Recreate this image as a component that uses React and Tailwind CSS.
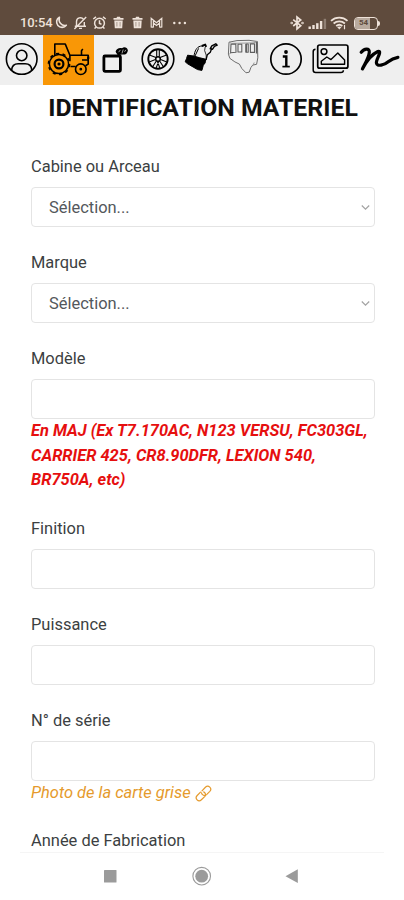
import React, { useState } from 'react';

// ------------------------
// Status bar
// ------------------------
function TrashIcon() {
  return (
    <svg className="w-[19px] h-5 shrink-0" viewBox="0 0 19 20" fill="currentColor">
      <path d="M4.5 5h3l.6-1.2h2.8l.6 1.2h3v1.7h-10zM5.3 7.5h8.4l-.5 7.7h-7.4z" />
      <path d="M7.9 9v4.5M11.1 9v4.5" stroke="#8d7b6e" strokeWidth="0.7" />
    </svg>
  );
}

function StatusBar() {
  return (
    <div className="h-[35px] bg-[#5f4b3d] text-[#eee2d9] flex items-start pt-[13px] pl-5 pr-6">
      <span className="w-8 text-[13px] leading-5 font-medium tracking-[-0.1px] whitespace-nowrap">10:54</span>
      {/* moon */}
      <svg className="w-[19px] h-5 shrink-0" viewBox="0 0 19 20" fill="none" stroke="currentColor" strokeWidth="1.6" strokeLinejoin="round">
        <path d="M7.4 4.2a5.4 5.4 0 1 0 6.9 8c-4.5 1.2-8.4-3-6.9-8z" />
      </svg>
      {/* muted bell */}
      <svg className="w-[19px] h-5 shrink-0" viewBox="0 0 19 20" fill="none" stroke="currentColor" strokeWidth="1.4">
        <path d="M5.5 12.8V8.5a3.8 3.8 0 0 1 7-2M13.3 9v4.2H15M3.8 13.3h9.8M8 15.4h3M3.4 16 15.2 4" />
      </svg>
      {/* alarm */}
      <svg className="w-[19px] h-5 shrink-0" viewBox="0 0 19 20" fill="none" stroke="currentColor" strokeWidth="1.5">
        <circle cx="9.5" cy="10.2" r="4.9" />
        <path d="M9.5 7.3v3.2l2 .7M3.3 6 6 3.9M15.7 6 13 3.9M5.9 14 4.6 15.6M13.1 14l1.3 1.6" />
      </svg>
      <TrashIcon />
      <TrashIcon />
      {/* mail */}
      <svg className="w-[19px] h-5 shrink-0" viewBox="0 0 19 20" fill="none" stroke="currentColor" strokeWidth="1.2">
        <path d="M4.2 14.6V5.3l5.3 4.4 5.3-4.4v9.3M6.4 14.6V7.5M12.6 14.6V7.5M4.2 14.2h2.2M12.6 14.2h2.2M6.4 10l3.1 2.4 3.1-2.4" />
      </svg>
      <svg className="w-[27px] h-5 shrink-0" viewBox="0 0 27 20" fill="currentColor">
        <circle cx="8.3" cy="10" r="1.2" />
        <circle cx="13.6" cy="10" r="1.2" />
        <circle cx="18.9" cy="10" r="1.2" />
      </svg>

      <div className="ml-auto flex items-start">
        {/* bluetooth */}
        <svg className="w-[18px] h-5" viewBox="0 0 18 20" fill="none" stroke="currentColor" strokeWidth="1.7">
          <path d="m5.2 6.7 7.5 6-3.7 3.2V4l3.7 3-7.5 6" />
          <circle cx="3.7" cy="10" r="0.4" />
          <circle cx="14.5" cy="10" r="0.4" />
        </svg>
        {/* signal */}
        <svg className="w-6 h-5" viewBox="0 0 24 20" fill="currentColor">
          <rect x="2.5" y="13.5" width="2.4" height="2.5" />
          <rect x="6.3" y="12" width="2.4" height="4" />
          <rect x="10.1" y="10.2" width="2.4" height="5.8" />
          <rect x="13.9" y="8" width="2.4" height="8" />
          <rect x="17.7" y="5.8" width="2.4" height="10.2" opacity="0.35" />
        </svg>
        {/* wifi */}
        <svg className="w-5 h-5" viewBox="0 0 20 20" fill="none" stroke="currentColor" strokeWidth="1.8">
          <path d="M1 7.8c4.8-4.3 11.7-4.3 16.5 0M3.6 10.5c3.3-2.8 8-2.8 11.3 0M6.2 13c1.8-1.5 4.4-1.5 6.1 0" />
          <path d="m7.1 14.1 2.2 2.3 2.2-2.3c-1.3-.9-3.1-.9-4.4 0z" fill="currentColor" stroke="none" />
          <path d="M14.5 12v4.3" strokeWidth="1.2" />
        </svg>
        {/* battery */}
        <div className="flex items-center h-5 pl-1">
          <div className="w-6 h-[13px] rounded-[4px] border-[1.5px] border-[#eee2d9] flex">
            <span className="w-[15px] bg-[#b8aa9e] rounded-l-[2px] text-[8px] leading-[10px] font-bold pl-1 text-[#5f4b3d]">54</span>
          </div>
          <span className="w-[2px] h-[5px] bg-[#eee2d9] rounded-r" />
        </div>
      </div>
    </div>
  );
}

// ------------------------
// Toolbar icons
// ------------------------
function UserIcon() {
  return (
    <svg className="w-[43px] h-[50px]" viewBox="0 35 43 50" fill="none" stroke="currentColor" strokeWidth="1.6">
      <circle cx="21.7" cy="59" r="15.3" />
      <circle cx="21.7" cy="55.5" r="5.2" />
      <path d="M11.6 70.2c.3-4.6 3-6.4 6.6-6.4h7c3.6 0 6.3 1.8 6.6 6.4" />
    </svg>
  );
}

function TractorIcon() {
  return (
    <svg className="w-[51px] h-[50px]" viewBox="43 35 51 50" fill="none" stroke="currentColor" strokeWidth="1.6" strokeLinejoin="round">
      <circle cx="59" cy="64" r="9.6" strokeWidth="1.5" />
      <circle cx="59" cy="64" r="10.6" strokeWidth="1.5" strokeDasharray="3.2 3.46" />
      <circle cx="59" cy="64" r="4.4" strokeWidth="2.2" />
      <circle cx="59" cy="64" r="0.8" fill="currentColor" />
      <circle cx="80.8" cy="69.2" r="5.3" />
      <circle cx="80.8" cy="69.2" r="0.6" fill="currentColor" />
      <path d="M54.8 55.5V44h10.5l4.6 11.3h18.3v8.8l-2.7 1.6M65.2 44l4.7 11.3v6M70.5 66.5h5.2M81.5 55.2v-4.5l1.3-1.6M82 60h6.2" />
      <path d="M88.2 56.5v2.5" strokeWidth="2.2" />
    </svg>
  );
}

function ImplementIcon() {
  return (
    <svg className="w-[43px] h-[50px]" viewBox="94 35 43 50" fill="none" stroke="currentColor">
      <rect x="103.9" y="56" width="16.5" height="15.3" rx="1" strokeWidth="2.8" />
      <path d="M118.6 55.5v-4" strokeWidth="2.6" />
      <path d="M115.6 51.6c.8-3.2 3.8-4.2 6.4-3.4 2.2-1.7 5.4-.7 5.9 2.2-.5 3.4-3 4.8-6 4-2.4.7-5.6.2-6.3-2.8z" fill="currentColor" stroke="none" />
      <path d="m118.6 52.2 1.8-2.3M122 53.4l1.2-3.9M124.6 51.8l1.2-2" stroke="#c9c9c9" strokeWidth="0.8" />
    </svg>
  );
}

function WheelIcon() {
  return (
    <svg className="w-[43px] h-[50px]" viewBox="137 35 43 50" fill="none" stroke="currentColor" strokeWidth="1.6">
      <circle cx="158" cy="59" r="15.8" />
      <circle cx="158" cy="59" r="9.7" strokeWidth="1.9" />
      <circle cx="158" cy="59" r="2.3" strokeWidth="1.5" />
      <path
        d="M156.7 56.8v-7M159.3 56.8v-7M160 57.6l6.6-2.6M160.6 59.6l6.2 2.4M159.6 61l4 6M157.3 61.3l2.6 6.8M158.7 61.3l-2.6 6.8M156.4 61l-4 6M155.4 59.6l-6.2 2.4M156 57.6l-6.6-2.6"
        strokeWidth="1.1"
      />
    </svg>
  );
}

function LoaderIcon() {
  return (
    <svg className="w-[42px] h-[50px]" viewBox="180 35 42 50" fill="none" stroke="currentColor" strokeLinejoin="round">
      <path d="m187.6 55.2 6 .8 6.2 1.8 5.9 1.4-.6 3.8-1.8 2.2-1.4 5.2-4.3-.8-3.8-2.2-6.2-3.6-2.4-2 1.3-3.2z" fill="currentColor" strokeWidth="1" />
      <path d="M194 56c.8-5 2.4-8.8 6.4-9.8l3.4-.4M195 56l3.6-7.6" strokeWidth="1" />
      <path d="m205.2 47-.6 3.5 1.6 4.5v5" strokeWidth="0.8" />
      <path d="m201.8 46 3.4-1.4 1 2.3" strokeWidth="1.9" />
      <path d="m206 60 1.3-5.2 3-2.6 1.3-3.4" strokeWidth="1.3" />
      <path d="m210.2 48.8 1.6-3 4-2 1.4 1.4-2.8 1.2-1.8 2.8z" strokeWidth="1.4" />
    </svg>
  );
}

function CabIcon() {
  return (
    <svg className="w-[42px] h-[50px]" viewBox="222 35 42 50" fill="none" stroke="#5f5f5f" strokeWidth="0.9" strokeLinejoin="round">
      <path d="m229 42.2 8-1.6 12-.3 8.4 1.2.4 16.3-1.2 6.5-3.9.8-1.8 2.4-1.7 4.7-3.2.6-4.1-4.2-2.5-4.5-4.5-2.2-5-3.5-1.5-4.2z" />
      <path d="m229 42.2 2.4 1.2 21.7-.5 4.3-1.4M229.2 54.2l1.5-1M253.2 65l1-2.5" stroke="#8e8e8e" />
      <path d="m231 44.2 4.8-.2.2 8.3-5.4.5zM238 44.2h3.8v7.8H238zM246 44h2.2v8.3H246zM250.4 43.9h4.1v8.5h-4.1z" strokeWidth="1.1" />
      <path d="M256.6 42v11.5M246.2 44v8.3" strokeWidth="1.5" />
    </svg>
  );
}

function InfoIcon() {
  return (
    <svg className="w-11 h-[50px]" viewBox="264 35 44 50" fill="none" stroke="currentColor" strokeWidth="1.7">
      <circle cx="286" cy="59" r="15.2" />
      <circle cx="286" cy="52" r="1.9" fill="currentColor" stroke="none" />
      <path d="M282.8 56.5h3.5v10" strokeWidth="2.4" />
      <path d="M282.4 66.6h7.4" strokeWidth="1.7" />
    </svg>
  );
}

function GalleryIcon() {
  return (
    <svg className="w-[45px] h-[50px]" viewBox="308 35 45 50" fill="none" stroke="currentColor" strokeWidth="1.7" strokeLinejoin="round">
      <rect x="317.7" y="45" width="30.2" height="23.2" rx="2" />
      <path d="M315.5 49.3c-1.6 0-2.3.8-2.3 2.4v18.4c0 1.7.7 2.5 2.4 2.5h25.2c1.6 0 2.6-.8 2.6-2.3" strokeWidth="1.5" />
      <circle cx="324" cy="51.6" r="2.9" strokeWidth="1.5" />
      <path d="M321.3 64.2v-3l5.5-4.2 4.2 2.6 6.8-6.6 6.8 7.1v4.1z" strokeWidth="1.4" />
    </svg>
  );
}

function SignatureIcon() {
  return (
    <svg className="w-[51px] h-[50px]" viewBox="353 35 51 50" fill="none" stroke="currentColor" strokeWidth="3.2" strokeLinecap="round" strokeLinejoin="round">
      <path d="M361.2 52.3c3-4 8.6-4.7 8.1.1-.5 5.2-3.8 10.5-6.9 16.5 4.2-8 9.2-14.5 15.4-17.4 5-1.3-1.8 8-1.4 11.3.4 4.4 8.2 2.1 11.8-1 3-2.5 6-3.9 9.7-4.5" />
    </svg>
  );
}

const tabs = [
  { id: 'client', Icon: UserIcon },
  { id: 'materiel', Icon: TractorIcon },
  { id: 'equipement', Icon: ImplementIcon },
  { id: 'roues', Icon: WheelIcon },
  { id: 'chargeur', Icon: LoaderIcon },
  { id: 'cabine', Icon: CabIcon },
  { id: 'infos', Icon: InfoIcon },
  { id: 'photos', Icon: GalleryIcon },
  { id: 'signature', Icon: SignatureIcon }
];

function Toolbar({ active, onChange }) {
  return (
    <nav className="flex h-[50px] bg-[#efefef] text-black">
      {tabs.map(({ id, Icon }) => (
        <button key={id} onClick={() => onChange(id)} className={`shrink-0 ${active === id ? 'bg-[#f99706]' : ''}`}>
          <Icon />
        </button>
      ))}
    </nav>
  );
}

// ------------------------
// Form fields
// ------------------------
function Field({ label, select, children }) {
  return (
    <div className="mb-6">
      <label className="block h-6 mb-2 text-[16.45px] leading-6 text-[#3c3f42]">{label}</label>
      <div className="h-10 rounded-[4px] border border-[#e4e4e4] bg-white flex items-center justify-between pl-[17px] pr-1 text-[16.45px] text-[#54585c]">
        {select && (
          <>
            <span className="pt-0.5">Sélection...</span>
            <svg className="w-[9px] h-[7px]" viewBox="0 0 9 7" fill="none" stroke="#a3a3a3" strokeWidth="1.2">
              <path d="m.8 1.5 3.7 3.7 3.7-3.7" />
            </svg>
          </>
        )}
      </div>
      {children}
    </div>
  );
}

function SystemNav() {
  return (
    <div className="h-[48px] shrink-0 bg-white px-5">
      <div className="border-t border-[#f5f5f5] h-full">
        <svg className="w-full h-[47px]" viewBox="20 853 364 47" fill="#9b9b9b">
          <rect x="104" y="870" width="12.5" height="12.5" rx="0.6" />
          <circle cx="201.7" cy="876.2" r="6.4" />
          <circle cx="201.7" cy="876.2" r="8.8" fill="none" stroke="#9b9b9b" strokeWidth="1.1" />
          <path d="M285.5 876.2 297.8 869.3v13.8z" />
        </svg>
      </div>
    </div>
  );
}

export default function App() {
  const [active, setActive] = useState('materiel');

  return (
    <div className="w-[404px] h-[900px] overflow-hidden bg-white flex flex-col font-['Roboto',sans-serif]">
      <StatusBar />
      <Toolbar active={active} onChange={setActive} />

      <main className="flex-1 min-h-0 overflow-hidden pl-[31px] pr-[29px]">
        <h1 className="h-[70px] pt-[7px] text-center text-[24.8px] leading-8 font-bold text-[#111] whitespace-nowrap">
          IDENTIFICATION MATERIEL
        </h1>

        <Field label="Cabine ou Arceau" select />
        <Field label="Marque" select />
        <Field label="Modèle">
          <p className="text-[16.45px] leading-[24.6px] font-bold italic text-[#e60f0f] whitespace-nowrap">
            En MAJ (Ex T7.170AC, N123 VERSU, FC303GL,
            <br />
            CARRIER 425, CR8.90DFR, LEXION 540,
            <br />
            BR750A, etc)
          </p>
        </Field>
        <Field label="Finition" />
        <Field label="Puissance" />
        <Field label="N° de série">
          <p className="flex items-center gap-1 text-[16.45px] leading-[24.6px] italic text-[#e59a2c]">
            Photo de la carte grise
            <svg className="w-[17px] h-[17px]" viewBox="0 0 17 17" fill="none" stroke="currentColor" strokeWidth="1.2" strokeLinecap="round">
              <path d="M7 5.8 10.4 2.3c3-2.8 7.2 1 4.4 4.1L11.6 9.6c-2 1.7-4.7.7-5.1-1.7" />
              <path d="M5.5 7.2 2.2 10.5c-2.9 3 1.2 7.2 4.2 4.3l3.5-3.5c1.2-1.4.6-3.6-1.2-4.4" />
            </svg>
          </p>
        </Field>
        <Field label="Année de Fabrication" />
      </main>

      <SystemNav />
    </div>
  );
}
